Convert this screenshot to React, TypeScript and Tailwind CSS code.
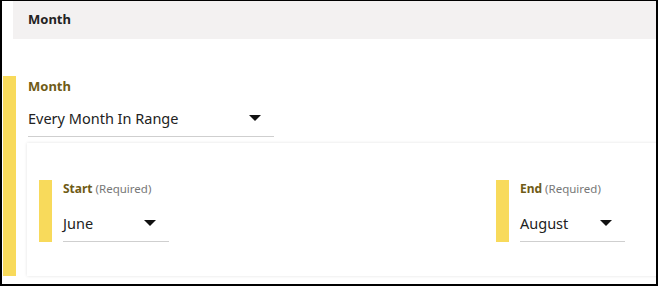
import React from 'react';

const Caret: React.FC = () => (
    <svg width="12" height="6" viewBox="0 0 12 6" className="shrink-0">
        <path d="M0 0 L12 0 L6 6 Z" fill="#111" />
    </svg>
);

interface SelectProps {
    value: string;
    width: string;
}

const Select: React.FC<SelectProps> = ({ value, width }) => (
    <div className={`flex items-start justify-between border-b border-[#cfcfcf] pb-[6px] ${width}`}>
        <span className="leading-[24px] text-[14.5px] text-[#222]">{value}</span>
        <div className="pt-[9px] pr-[13px]">
            <Caret />
        </div>
    </div>
);

const Field: React.FC<{ label: string; value: string; width: string }> = ({ label, value, width }) => (
    <div className="flex">
        <div className="w-[13px] bg-[#f8da5b]" />
        <div className="pl-[11px]">
            <div className="leading-[18px] text-[12px]">
                <span className="font-bold text-[#6f5b16]">{label}</span>
                <span className="text-[#777] text-[11.5px]"> (Required)</span>
            </div>
            <div className="mt-[13px]">
                <Select value={value} width={width} />
            </div>
        </div>
    </div>
);

export default function App() {
    return (
        <div
            className="w-[658px] h-[286px] overflow-hidden bg-white border-t border-l-2 border-r-2 border-b-2 border-black"
            style={{ fontFamily: '"Noto Sans", "Open Sans", sans-serif' }}
        >
            <div className="ml-[11px] h-[38px] bg-[#f3f1f1] flex items-center pl-[15px]">
                <span className="font-bold text-[13px] text-[#222]">Month</span>
            </div>
            <div className="mt-[37px] flex">
                <div className="ml-[1px] w-[13px] bg-[#f8da5b]" />
                <div className="flex-1 pl-[12px]">
                    <div className="leading-[20px] text-[13px] font-bold text-[#6f5b16]">Month</div>
                    <div className="mt-[10px]">
                        <Select value="Every Month In Range" width="w-[246px]" />
                    </div>
                    <div className="mt-[6px] -ml-[1px] -mr-[4px] h-[133px] bg-white shadow-[0_0_3px_rgba(0,0,0,0.12)] pt-[37px] pl-[12px] flex items-start">
                        <Field label="Start" value="June" width="w-[106px]" />
                        <div className="ml-[327px]">
                            <Field label="End" value="August" width="w-[105px]" />
                        </div>
                    </div>
                </div>
            </div>
        </div>
    );
}
